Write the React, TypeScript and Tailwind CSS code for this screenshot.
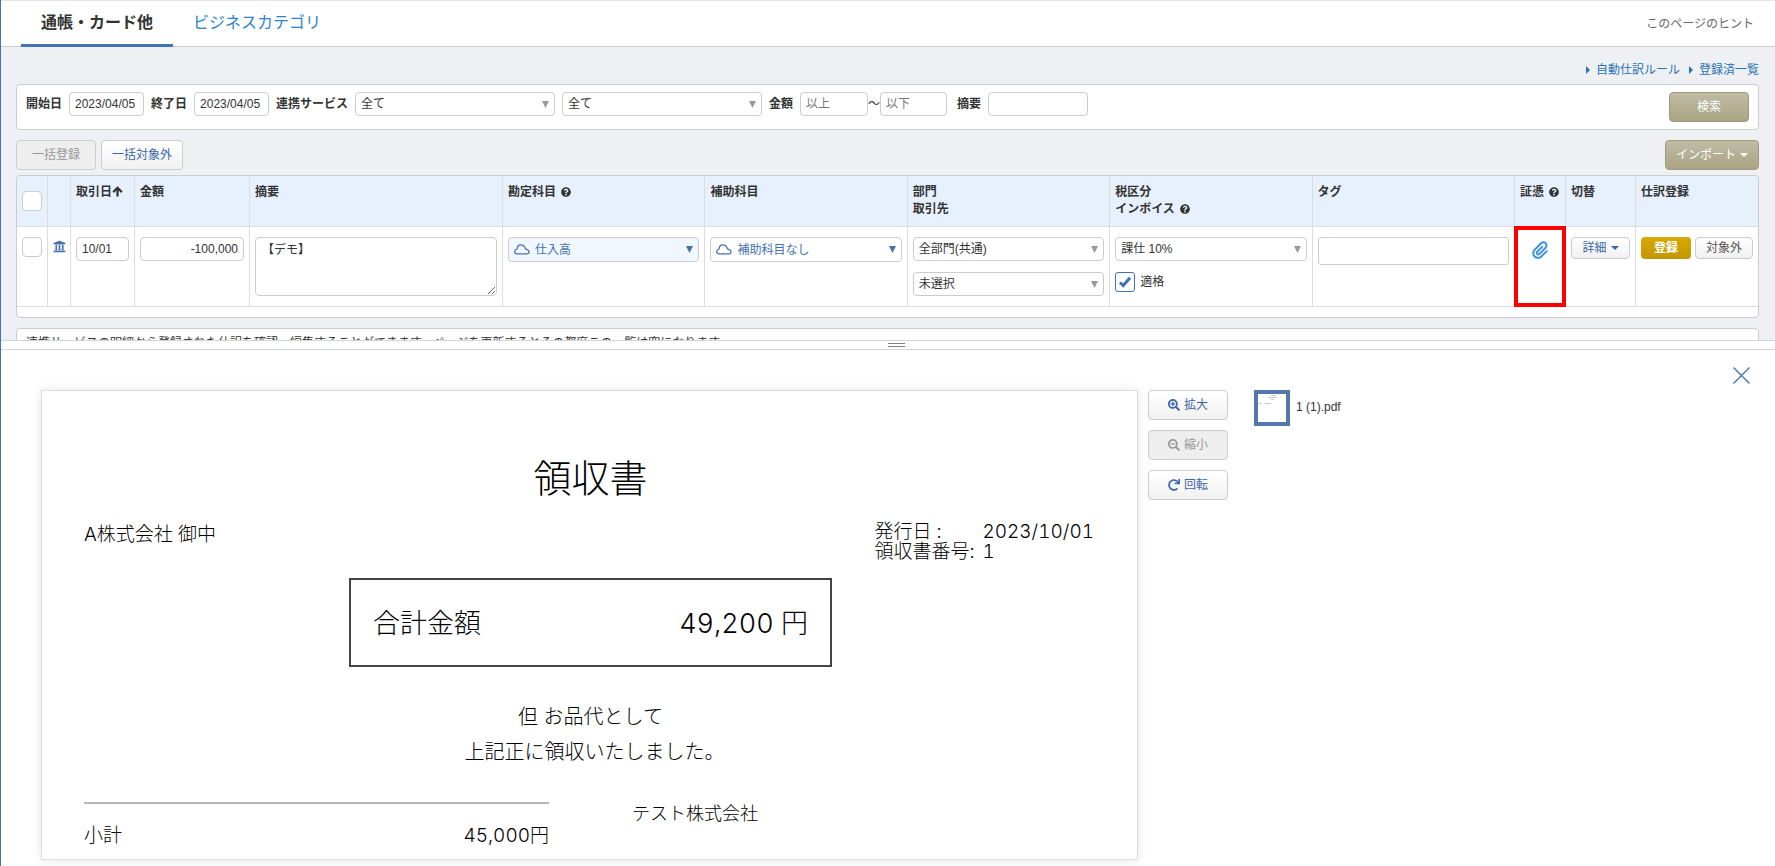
import React from 'react';
import clsx from 'clsx';
import { FaQuestionCircle, FaRedo, FaSearchMinus, FaSearchPlus, FaUniversity } from 'react-icons/fa';
import { FaPaperclip } from 'react-icons/fa6';

const FIELD =
	'block h-6 rounded-[4px] border border-[#ccc] bg-white px-[5px] text-[12px] leading-4 text-[#333] placeholder:text-[#777] outline-none';
const TH = 'border-r border-b border-[#ddd] px-[5px] py-2 text-left align-top font-bold last:border-r-0';
const TD = 'border-r border-b border-[#ddd] px-[5px] py-[10px] align-top last:border-r-0';

type SelectProps = {
	label: string;
	value: string;
	className?: string;
	blue?: boolean;
	cloud?: boolean;
};

const Cloud = () => (
	<svg viewBox="0 0 18 12" className="absolute top-[7px] left-[5px] h-[11px] w-[17px]" fill="none" stroke="#4471b4" strokeWidth="1.4">
		<path d="M3.6 10.8h11.2a2.3 2.3 0 0 0 .8-4.5c-1.2-.4-1.8-.3-2.400-1.500C12.300 2.300 10.500 1 8.300 1 5.800 1 4.500 2.600 4.300 4.700c0 .9-.4 1.100-1.200 1.300a2.500 2.500 0 0 0 .5 4.800Z" />
	</svg>
);

const CaretDown = () => (
	<svg viewBox="0 0 8 4" className="h-1 w-2" fill="currentColor">
		<path d="M0 0h8L4 4Z" />
	</svg>
);

const CaretRight = () => (
	<svg viewBox="0 0 4 8" className="h-2 w-1" fill="currentColor">
		<path d="M0 0v8l4-4Z" />
	</svg>
);

const Help = () => <FaQuestionCircle className="ml-[2px] inline size-[10px] align-[-1px]" />;

const Select: React.FC<SelectProps> = ({ label, value, className, blue, cloud }) => {
	return (
		<div className={clsx('relative', className)}>
			{cloud && <Cloud />}
			<select
				aria-label={label}
				className={clsx(
					'block w-full appearance-none rounded-[4px] border border-[#ccc] pr-5 text-[12px] leading-4 outline-none',
					blue ? 'text-[#4471b4]' : 'text-[#333]',
					cloud ? 'h-[25px] pl-[26px]' : 'h-6 pl-[5px]',
					blue && label === '勘定科目' ? 'bg-[#f0f7ff]' : 'bg-white'
				)}
			>
				<option>{value}</option>
			</select>
			<svg viewBox="0 0 7 7" className="pointer-events-none absolute top-[9px] right-[6px] size-[7px]" fill={blue ? '#4471b4' : '#999'}>
				<path d="M0 0h7L3.500 7Z" />
			</svg>
		</div>
	);
};

type ButtonProps = {
	children: React.ReactNode;
	className?: string;
	disabled?: boolean;
};

const Button: React.FC<ButtonProps> = ({ children, className, disabled }) => {
	return (
		<button
			type="button"
			disabled={disabled}
			className={clsx(
				'flex h-[30px] items-center justify-center gap-1 rounded-[4px] border border-[#ccc] text-[12px]',
				disabled ? 'bg-[#eee] text-[#999]' : 'bg-linear-to-b from-white to-[#f1f1f1] text-[#3a66ab]',
				className
			)}
		>
			{children}
		</button>
	);
};

const KHAKI =
	'flex h-[30px] items-center justify-center gap-1 rounded-[4px] border border-[#a09a78] bg-linear-to-b from-[#c0bca6] to-[#aaa482] text-[12px] text-white';

const Header = () => {
	return (
		<header className="flex h-[47px] items-stretch justify-between border-t border-b border-t-[#e5e5e5] border-b-[#ccc] bg-white pr-[21px] pl-5">
			<nav className="-mb-px flex text-[16px]">
				<a href="#cards" className="flex items-center border-b-[3px] border-[#4471b4] px-5 font-bold text-[#333]">
					通帳・カード他
				</a>
				<a href="#business" className="flex items-center border-b-[3px] border-transparent px-5 text-[#2b82cf]">
					ビジネスカテゴリ
				</a>
			</nav>
			<a href="#hint" className="flex items-center text-[12px] text-[#666]">
				このページのヒント
			</a>
		</header>
	);
};

const SearchForm = () => {
	return (
		<form className="flex items-start justify-between rounded-[4px] border border-[#ccc] bg-white px-[9px] py-[7px]">
			<div className="flex items-center pb-[6px] text-[12px] leading-6">
				<label htmlFor="from" className="mr-[7px] font-bold">
					開始日
				</label>
				<input id="from" defaultValue="2023/04/05" className={clsx(FIELD, 'mr-[7px] w-[75px]')} />
				<label htmlFor="to" className="mr-[7px] font-bold">
					終了日
				</label>
				<input id="to" defaultValue="2023/04/05" className={clsx(FIELD, 'mr-[7px] w-[75px]')} />
				<span className="mr-[7px] font-bold">連携サービス</span>
				<Select label="連携サービス" value="全て" className="mr-[7px] w-[200px]" />
				<Select label="連携サービスの口座" value="全て" className="mr-[7px] w-[200px]" />
				<span className="mr-[7px] font-bold">金額</span>
				<input aria-label="金額の下限" placeholder="以上" className={clsx(FIELD, 'w-[68px]')} />
				<span className="w-3 text-center">～</span>
				<input aria-label="金額の上限" placeholder="以下" className={clsx(FIELD, 'mr-[10px] w-[67px]')} />
				<label htmlFor="memo" className="mr-[7px] font-bold">
					摘要
				</label>
				<input id="memo" className={clsx(FIELD, 'w-[100px]')} />
			</div>
			<button type="button" className={clsx(KHAKI, 'w-20')}>
				検索
			</button>
		</form>
	);
};

const CHECKBOX = 'block size-5 appearance-none rounded-[4px] border border-[#ccc] bg-white';

const EntryTable = () => {
	return (
		<div className="rounded-[4px] border border-[#ccc] bg-white pb-[10px]">
			<table className="w-full table-fixed border-separate border-spacing-0 text-[12px] leading-[17px]">
				<colgroup>
					<col className="w-[31px]" />
					<col className="w-[23px]" />
					<col className="w-16" />
					<col className="w-[115px]" />
					<col className="w-[253px]" />
					<col />
					<col />
					<col />
					<col />
					<col />
					<col className="w-[51px]" />
					<col className="w-[70px]" />
					<col className="w-[122px]" />
				</colgroup>
				<thead className="bg-[#e6f1fd]">
					<tr>
						<th className={clsx(TH, 'rounded-tl-[4px]')}>
							<input type="checkbox" aria-label="全て選択" className={clsx(CHECKBOX, 'mt-[7px]')} />
						</th>
						<th className={TH} />
						<th className={clsx(TH, 'whitespace-nowrap')}>
							取引日
							<svg viewBox="0 0 12 12" className="inline size-[11px] align-[-1px]" fill="none" stroke="currentColor" strokeWidth="2.4">
								<path d="M6 11.500V2M1.300 6.700 6 2l4.700 4.700" />
							</svg>
						</th>
						<th className={TH}>金額</th>
						<th className={TH}>摘要</th>
						<th className={TH}>
							勘定科目 <Help />
						</th>
						<th className={TH}>補助科目</th>
						<th className={TH}>
							部門
							<br />
							取引先
						</th>
						<th className={TH}>
							税区分
							<br />
							インボイス <Help />
						</th>
						<th className={TH}>タグ</th>
						<th className={clsx(TH, 'whitespace-nowrap')}>
							証憑 <Help />
						</th>
						<th className={TH}>切替</th>
						<th className={clsx(TH, 'rounded-tr-[4px]')}>仕訳登録</th>
					</tr>
				</thead>
				<tbody>
					<tr>
						<td className={TD}>
							<input type="checkbox" aria-label="明細を選択" className={CHECKBOX} />
						</td>
						<td className={TD}>
							<FaUniversity className="mt-[3px] size-[13px] text-[#4471b4]" />
						</td>
						<td className={TD}>
							<input aria-label="取引日" defaultValue="10/01" className={clsx(FIELD, 'w-full')} />
						</td>
						<td className={TD}>
							<input aria-label="金額" defaultValue="-100,000" className={clsx(FIELD, 'w-full text-right')} />
						</td>
						<td className={TD}>
							<textarea
								aria-label="摘要"
								defaultValue="【デモ】"
								className="block h-[59px] w-full rounded-[4px] border border-[#ccc] px-[6px] py-[3px] text-[12px] leading-[18px] outline-none"
							/>
						</td>
						<td className={TD}>
							<Select label="勘定科目" value="仕入高" blue cloud />
						</td>
						<td className={TD}>
							<Select label="補助科目" value="補助科目なし" blue cloud />
						</td>
						<td className={TD}>
							<Select label="部門" value="全部門(共通)" className="mb-[11px]" />
							<Select label="取引先" value="未選択" />
						</td>
						<td className={TD}>
							<Select label="税区分" value="課仕 10%" className="mb-[11px]" />
							<label className="flex items-center gap-[5px]">
								<span className="relative">
									<input type="checkbox" defaultChecked className="block size-5 appearance-none rounded-[3px] border border-[#4471b4] bg-white" />
									<svg viewBox="0 0 12 12" className="pointer-events-none absolute top-1 left-1 size-3" fill="none" stroke="#4471b4" strokeWidth="3">
										<path d="m1 6.500 3.200 3L11 1.800" />
									</svg>
								</span>
								適格
							</label>
						</td>
						<td className={TD}>
							<input aria-label="タグ" className="block h-7 w-full rounded-[3px] border border-[#ccc] bg-white px-[5px] outline-none" />
						</td>
						<td className={clsx(TD, 'relative')}>
							<button type="button" aria-label="証憑を表示" className="mx-auto block pt-1 text-[#3d94e0]">
								<FaPaperclip className="size-[18px]" />
							</button>
							<span className="pointer-events-none absolute -inset-px border-4 border-[#f00]" />
						</td>
						<td className={TD}>
							<Button className="h-[22px]! w-full">
								詳細 <CaretDown />
							</Button>
						</td>
						<td className={TD}>
							<div className="flex gap-1">
								<button type="button" className="h-[22px] w-[50px] rounded-[4px] bg-linear-to-b from-[#d8a900] to-[#c49600] font-bold text-white">
									登録
								</button>
								<Button className="h-[22px]! w-[58px] text-[#555]!">対象外</Button>
							</div>
						</td>
					</tr>
				</tbody>
			</table>
		</div>
	);
};

const Receipt = () => {
	return (
		<article className="w-[1097px] shrink border border-[#ddd] bg-white pt-[51px] pr-[40px] pl-[42px] font-['Inter','Noto_Sans_CJK_JP',sans-serif] text-[19px] leading-5 font-light text-black tabular-nums shadow-[0_0_10px_rgba(0,0,0,0.1)]">
			<h1 className="text-center text-[38px] leading-[72px]">領収書</h1>
			<div className="mt-[8px] flex items-start justify-between">
				<div className="pt-[3px]">A株式会社 御中</div>
				<dl className="mr-[3px] grid grid-cols-[108px_auto] whitespace-nowrap">
					<dt>発行日 :</dt>
					<dd>2023/10/01</dd>
					<dt>領収書番号:</dt>
					<dd>1</dd>
				</dl>
			</div>
			<div className="mx-auto mt-[16px] flex h-[89px] w-[483px] items-center justify-between border-2 border-[#444] px-[22px] pt-[2px] text-[27px]">
				<span>合計金額</span>
				<span>49,200 円</span>
			</div>
			<div className="mt-[33px] text-center text-[20px] leading-[35px]">
				<p>但 お品代として</p>
				<p className="pl-2">上記正に領収いたしました。</p>
			</div>
			<div className="mt-[32px] flex gap-[83px]">
				<div className="flex w-[465px] justify-between border-t-2 border-[#b5b5b5] pt-[22px]">
					<span>小計</span>
					<span>45,000円</span>
				</div>
				<span className="pt-[2px] text-[18px]">テスト株式会社</span>
			</div>
		</article>
	);
};

const Viewer = () => {
	return (
		<section className="relative flex min-h-0 flex-1 items-stretch bg-white pt-[40px] pb-[6px] pl-[40px]">
			<Receipt />
			<div className="ml-[10px] flex w-20 shrink-0 flex-col gap-[10px]">
				<Button>
					<FaSearchPlus className="size-3" />
					拡大
				</Button>
				<Button disabled>
					<FaSearchMinus className="size-3" />
					縮小
				</Button>
				<Button>
					<FaRedo className="size-3" />
					回転
				</Button>
			</div>
			<a href="#file" className="ml-[26px] flex h-9 items-center gap-[6px] text-[12px] text-[#333]">
				<span className="block size-9 border-4 border-[#5379ac] bg-white">
					<svg viewBox="0 0 28 28" className="size-7" stroke="#ccc" strokeWidth="1">
						<path d="M13 1.500h5M10 3.500h9M13 5.500h3M0 9.500h4M6 9.500h7" />
					</svg>
				</span>
				<span className="pb-[2px]">1 (1).pdf</span>
			</a>
			<button type="button" aria-label="閉じる" className="absolute top-[17px] right-[25px] text-[#4471b4]">
				<svg viewBox="0 0 17 17" className="size-[17px]" stroke="currentColor" strokeWidth="1.3">
					<path d="m.5.5 16 16M16.500.500l-16 16" />
				</svg>
			</button>
		</section>
	);
};

const App: React.FC = () => {
	return (
		<div className="flex h-screen flex-col border-l border-[#4471b4] bg-white font-['Liberation_Sans','Noto_Sans_CJK_JP',sans-serif] text-[#333]">
			{/* upper pane of the splitter, cut off at the handle */}
			<div className="h-[340px] shrink-0 overflow-hidden bg-[#eff0f4]">
				<Header />
				<main className="pr-4 pl-[15px]">
					<div className="flex h-[37px] items-end justify-end gap-[9px] pb-1 text-[12px] leading-5 text-[#2a73b5]">
						<a href="#rules" className="flex items-center gap-[6px]">
							<CaretRight />
							自動仕訳ルール
						</a>
						<a href="#registered" className="flex items-center gap-[6px]">
							<CaretRight />
							登録済一覧
						</a>
					</div>
					<SearchForm />
					<div className="flex items-center gap-[5px] pt-[10px] pb-[5px]">
						<Button disabled className="w-20">
							一括登録
						</Button>
						<Button className="w-[82px]">一括対象外</Button>
						<button type="button" className={clsx(KHAKI, 'ml-auto w-[94px]')}>
							インポート <CaretDown />
						</button>
					</div>
					<EntryTable />
					<p className="mt-[10px] rounded-t-[4px] border border-[#ccc] bg-white px-[9px] py-[6px] text-[12px] leading-[17px]">
						連携サービスの明細から登録された仕訳を確認・編集することができます。ページを更新するとその都度この一覧は空になります。
					</p>
				</main>
			</div>
			<div className="flex h-[10px] shrink-0 items-center justify-center border-t border-b border-[#d5d6da] bg-white pl-4">
				<span className="h-1 w-[17px] border-t border-b border-[#7b8096]" />
			</div>
			<Viewer />
		</div>
	);
};

export default App;
